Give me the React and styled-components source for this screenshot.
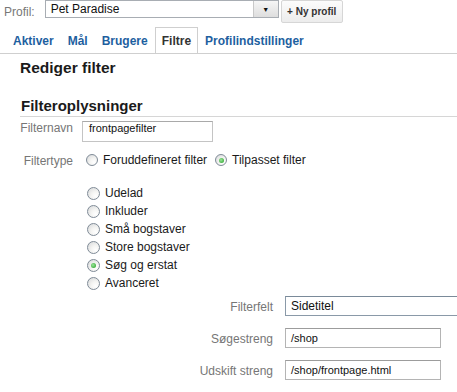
import React from 'react';
import styled, { createGlobalStyle } from 'styled-components';

const GlobalStyle = createGlobalStyle`
  body {
    margin: 0;
    background: #fff;
    font-family: "Liberation Sans", Arial, sans-serif;
    color: #222;
  }
`;

const Page = styled.div`
  width: 457px;
  height: 392px;
  overflow: hidden;
`;

const TopRow = styled.div`
  display: flex;
  align-items: flex-start;
  height: 27px;
  padding-left: 4px;
  box-sizing: border-box;
`;

const ProfileLabel = styled.span`
  font-size: 12px;
  line-height: 14px;
  color: #777;
  margin-top: 5px;
  margin-right: 10px;
`;

const ProfileSelect = styled.div`
  display: flex;
  width: 234px;
  height: 18px;
  box-sizing: border-box;
  border: 1px solid #a8adb3;
  span {
    flex: 1;
    padding-left: 5px;
    font-size: 12px;
    line-height: 16px;
    color: #111;
  }
`;

const DropButton = styled.div`
  width: 24px;
  display: flex;
  align-items: center;
  justify-content: center;
  border-left: 1px solid #c9c9c9;
  background: linear-gradient(#f6f6f6, #dedede);
  font-size: 7px;
  color: #111;
`;

const NewButton = styled.div`
  margin-left: 2px;
  width: 62px;
  height: 23px;
  box-sizing: border-box;
  border: 1px solid #d6d6d6;
  border-radius: 2px;
  background: linear-gradient(#fcfcfc, #ececec);
  display: flex;
  align-items: center;
  justify-content: center;
  font-size: 10px;
  font-weight: bold;
  color: #333;
`;

const TabBar = styled.div`
  display: flex;
  padding-left: 6px;
  border-bottom: 1px solid #cfcfcf;
`;

const Tab = styled.div`
  box-sizing: border-box;
  height: 26px;
  padding: 0 6px;
  display: flex;
  align-items: center;
  border: 1px solid ${p => (p.$active ? '#cfcfcf' : 'transparent')};
  border-bottom: 0;
  background: #fff;
  font-size: 12px;
  font-weight: bold;
  color: ${p => (p.$active ? '#333' : '#1e5f9f')};
  cursor: pointer;
`;

const Content = styled.div`
  padding-left: 20px;
`;

const Title = styled.h1`
  margin: 4px 0 0;
  font-size: 15.5px;
  line-height: 19px;
  font-weight: bold;
  color: #1a1a1a;
`;

const SectionHead = styled.h2`
  margin: 20px 0 0;
  padding: 0 0 1px 1px;
  font-size: 15px;
  line-height: 18px;
  font-weight: bold;
  color: #1a1a1a;
  border-bottom: 1px solid #d6d6d6;
`;

const Row = styled.div`
  display: flex;
  align-items: flex-start;
  margin-top: ${p => p.$top}px;
`;

const Label = styled.span`
  width: ${p => p.$width}px;
  margin-right: ${p => p.$gap}px;
  padding-top: ${p => p.$pad || 0}px;
  text-align: right;
  font-size: 12px;
  line-height: 14px;
  color: #767676;
  flex-shrink: 0;
`;

const TextBox = styled.div`
  box-sizing: border-box;
  width: ${p => p.$width}px;
  height: ${p => p.$height}px;
  padding: ${p => p.$pad}px 0 0 ${p => p.$left}px;
  border: 1px solid ${p => p.$border || '#b4b4b4'};
  border-top-color: ${p => p.$borderTop || '#9c9c9c'};
  font-size: ${p => p.$font}px;
  line-height: ${p => p.$font + 2}px;
  color: #111;
  white-space: nowrap;
  flex-shrink: 0;
`;

const Option = styled.label`
  display: flex;
  align-items: center;
  gap: 5px;
  height: ${p => p.$height}px;
  margin-right: ${p => p.$after || 0}px;
  font-size: 12px;
  color: #1a1a1a;
  white-space: nowrap;
`;

const RadioMark = styled.span`
  box-sizing: border-box;
  width: ${p => p.$size}px;
  height: ${p => p.$size}px;
  border-radius: 50%;
  border: 1px solid #7f8b97;
  background: radial-gradient(circle at 70% 72%, #ffffff 0, #f4f4f2 40%, #d4d6d8 100%);
  display: flex;
  align-items: center;
  justify-content: center;
  flex-shrink: 0;
  &::after {
    content: '';
    display: ${p => (p.$checked ? 'block' : 'none')};
    width: 5px;
    height: 5px;
    border-radius: 50%;
    background: radial-gradient(circle at 40% 40%, #9be69b, #219b21);
  }
`;

const RadioList = styled.div`
  display: flex;
  flex-direction: column;
  margin: 16px 0 0 67px;
`;

const FieldGrid = styled.div`
  display: grid;
  grid-template-columns: 253px auto;
  column-gap: 12px;
  row-gap: 12px;
  margin-top: 4px;
`;

const FieldLabel = styled.span`
  text-align: right;
  padding-top: 4px;
  font-size: 12px;
  line-height: 14px;
  color: #767676;
`;

const actions = ['Udelad', 'Inkluder', 'Små bogstaver', 'Store bogstaver', 'Søg og erstat', 'Avanceret'];
const tabs = ['Aktiver', 'Mål', 'Brugere', 'Filtre', 'Profilindstillinger'];

export default function App() {
  return (
    <Page>
      <GlobalStyle />
      <TopRow>
        <ProfileLabel>Profil:</ProfileLabel>
        <ProfileSelect>
          <span>Pet Paradise</span>
          <DropButton>▼</DropButton>
        </ProfileSelect>
        <NewButton>+ Ny profil</NewButton>
      </TopRow>
      <TabBar>
        {tabs.map(t => (
          <Tab key={t} $active={t === 'Filtre'}>{t}</Tab>
        ))}
      </TabBar>
      <Content>
        <Title>Rediger filter</Title>
        <SectionHead>Filteroplysninger</SectionHead>
        <Row $top={4}>
          <Label $width={53} $gap={9}>Filternavn</Label>
          <TextBox $width={131} $height={21} $pad={0} $left={6} $font={11} $border="#c4c4c4" $borderTop="#a9a9a9">
            frontpagefilter
          </TextBox>
        </Row>
        <Row $top={11}>
          <Label $width={53} $gap={13} $pad={1}>Filtertype</Label>
          <Option $height={14} $after={8}>
            <RadioMark $size={12} />
            Foruddefineret filter
          </Option>
          <Option $height={14}>
            <RadioMark $size={12} $checked />
            Tilpasset filter
          </Option>
        </Row>
        <RadioList>
          {actions.map(a => (
            <Option key={a} $height={18}>
              <RadioMark $size={13} $checked={a === 'Søg og erstat'} />
              {a}
            </Option>
          ))}
        </RadioList>
        <FieldGrid>
          <FieldLabel>Filterfelt</FieldLabel>
          <TextBox $width={180} $height={20} $pad={2} $left={5} $font={12} $border="#8a99a8" $borderTop="#7a8a99">
            Sidetitel
          </TextBox>
          <FieldLabel>Søgestreng</FieldLabel>
          <TextBox $width={156} $height={20} $pad={3} $left={5} $font={11}>/shop</TextBox>
          <FieldLabel>Udskift streng</FieldLabel>
          <TextBox $width={156} $height={20} $pad={3} $left={5} $font={11}>/shop/frontpage.html</TextBox>
        </FieldGrid>
      </Content>
    </Page>
  );
}
